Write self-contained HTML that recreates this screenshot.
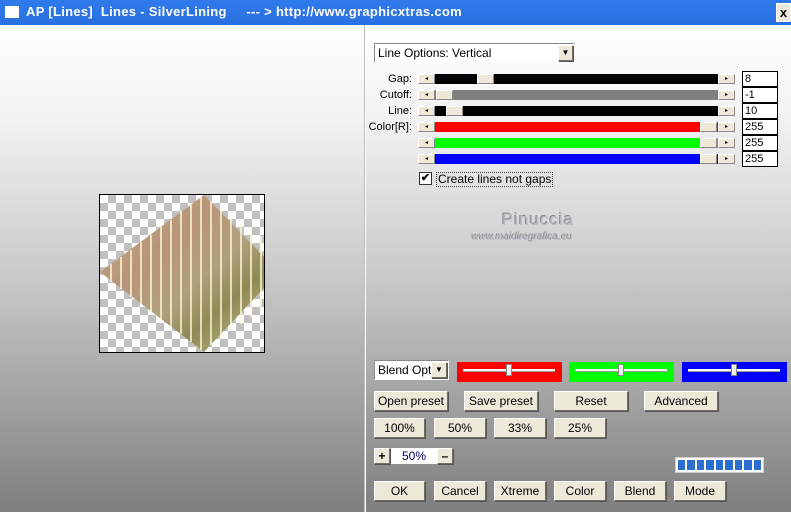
<!DOCTYPE html>
<html><head><style>
*{margin:0;padding:0;box-sizing:border-box}
body{width:791px;height:512px;position:relative;overflow:hidden;font-family:"Liberation Sans",sans-serif;font-size:11px;background:linear-gradient(#ffffff 25px,#f2f2f2 120px,#c8c8c8 280px,#a2a2a2 400px,#7f7f7f 512px)}
.a{position:absolute}
.title{left:0;top:0;width:791px;height:25px;background:linear-gradient(#2f7bec,#2a6fe0);color:#fff;font-size:13px;font-weight:bold;line-height:24px;padding-left:26px;letter-spacing:0.3px}
.btn{position:absolute;background:#ece9d8;border:1px solid;border-color:#fff #716f64 #716f64 #fff;box-shadow:1px 1px 0 #555;text-align:center;font-size:12px;color:#000;line-height:18px}
.arr{position:absolute;width:17px;height:10px;background:#ece9d8;border:1px solid;border-color:#fff #888 #888 #fff;font-size:6px;line-height:8px;text-align:center}
.val{position:absolute;left:742px;width:36px;height:16px;background:#fff;border:1px solid #000;font-size:11px;line-height:14px;padding-left:2px}
.lbl{position:absolute;width:60px;left:352px;text-align:right;font-size:11px;color:#000}
.chk{background-color:#fff;background-image:linear-gradient(45deg,#c0c0c0 25%,transparent 25%,transparent 75%,#c0c0c0 75%),linear-gradient(45deg,#c0c0c0 25%,transparent 25%,transparent 75%,#c0c0c0 75%);background-size:16px 16px;background-position:0 0,8px 8px}
</style></head><body>
<div class="a title">AP [Lines]&nbsp; Lines - SilverLining&nbsp;&nbsp;&nbsp;&nbsp; --- &gt; http://www.graphicxtras.com</div>
<div class="a" style="left:5px;top:6px;width:14px;height:12px;background:#fff;border-top:2px solid #fff"></div>
<div class="a" style="left:776px;top:3px;width:15px;height:19px;background:#ece9d8;border:1px solid #fff;font-weight:bold;font-size:13px;text-align:center;line-height:17px">x</div>
<div class="a" style="left:365px;top:25px;width:1px;height:487px;background:#fff"></div>
<div class="a" style="left:364px;top:25px;width:1px;height:487px;background:#bbb"></div>

<div class="a chk" style="left:99px;top:194px;width:166px;height:159px;border:1px solid #000;overflow:hidden">
<svg width="166" height="159" style="position:absolute;left:-1px;top:-1px">
<defs><linearGradient id="g" x1="0" y1="0" x2="1" y2="1">
<stop offset="0" stop-color="#c0ac80"/><stop offset="0.35" stop-color="#b8947a"/><stop offset="0.55" stop-color="#b0a07c"/><stop offset="0.7" stop-color="#8f8a55"/><stop offset="1" stop-color="#d0c898"/></linearGradient></defs>
<polygon points="1,78 105,1 180,78 105,158" fill="url(#g)"/>
<g stroke="#fff8d8" stroke-width="1.5">
<line x1="12" y1="70" x2="12" y2="88"/><line x1="22" y1="63" x2="22" y2="95"/><line x1="32" y1="56" x2="32" y2="103"/><line x1="42" y1="48" x2="42" y2="110"/><line x1="52" y1="41" x2="52" y2="118"/><line x1="62" y1="33" x2="62" y2="125"/><line x1="72" y1="26" x2="72" y2="133"/><line x1="82" y1="18" x2="82" y2="140"/><line x1="92" y1="11" x2="92" y2="148"/><line x1="102" y1="3" x2="102" y2="156"/><line x1="112" y1="7" x2="112" y2="151"/><line x1="122" y1="14" x2="122" y2="144"/><line x1="132" y1="21" x2="132" y2="137"/><line x1="142" y1="28" x2="142" y2="130"/><line x1="152" y1="35" x2="152" y2="123"/><line x1="162" y1="42" x2="162" y2="116"/>
</g></svg></div>

<div class="a" style="left:374px;top:43px;width:201px;height:20px;background:#fff;border:1px solid;border-color:#888 #fff #fff #888;font-size:12px;line-height:18px;padding-left:3px">Line Options: Vertical</div>
<div class="btn" style="left:558px;top:45px;width:15px;height:16px;font-size:8px;line-height:14px">▼</div>

<div class="lbl" style="top:73px">Gap:</div>
<div class="lbl" style="top:89px">Cutoff:</div>
<div class="lbl" style="top:105px">Line:</div>
<div class="lbl" style="top:121px">Color[R]:</div>

<div class="arr" style="left:418px;top:74px">◂</div><div class="a" style="left:435px;top:74px;width:283px;height:10px;background:#000"></div><div class="arr" style="left:718px;top:74px">▸</div><div class="arr" style="left:477px;top:74px;width:17px"></div>
<div class="arr" style="left:418px;top:90px">◂</div><div class="a" style="left:435px;top:90px;width:283px;height:10px;background:#808080"></div><div class="arr" style="left:718px;top:90px">▸</div><div class="arr" style="left:436px;top:90px"></div>
<div class="arr" style="left:418px;top:106px">◂</div><div class="a" style="left:435px;top:106px;width:283px;height:10px;background:#000"></div><div class="arr" style="left:718px;top:106px">▸</div><div class="arr" style="left:446px;top:106px"></div>
<div class="arr" style="left:418px;top:122px">◂</div><div class="a" style="left:435px;top:122px;width:283px;height:10px;background:#f00"></div><div class="arr" style="left:718px;top:122px">▸</div><div class="arr" style="left:700px;top:122px"></div>
<div class="arr" style="left:418px;top:138px">◂</div><div class="a" style="left:435px;top:138px;width:283px;height:10px;background:#0f0"></div><div class="arr" style="left:718px;top:138px">▸</div><div class="arr" style="left:700px;top:138px"></div>
<div class="arr" style="left:418px;top:154px">◂</div><div class="a" style="left:435px;top:154px;width:283px;height:10px;background:#00f"></div><div class="arr" style="left:718px;top:154px">▸</div><div class="arr" style="left:700px;top:154px"></div>

<div class="val" style="top:71px">8</div>
<div class="val" style="top:87px">-1</div>
<div class="val" style="top:103px">10</div>
<div class="val" style="top:119px">255</div>
<div class="val" style="top:135px">255</div>
<div class="val" style="top:151px">255</div>

<div class="a" style="left:419px;top:172px;width:13px;height:13px;background:#fff;border:1px solid #333;font-size:11px;line-height:11px;text-align:center;font-weight:bold">✔</div>
<div class="a" style="left:436px;top:172px;font-size:12px;border:1px dotted #444;padding:0 1px;line-height:13px">Create lines not gaps</div>

<div class="a" style="left:502px;top:210px;font-size:17px;color:#b8b8c0;text-shadow:-1px -1px 0 #888;letter-spacing:1px">Pinuccia</div>
<div class="a" style="left:472px;top:232px;font-size:10px;color:#b8b8c0;text-shadow:-1px -1px 0 #888;font-style:italic">www.maidiregrafica.eu</div>

<div class="a" style="left:374px;top:360px;width:75px;height:20px;background:#fff;border:1px solid;border-color:#888 #fff #fff #888;font-size:12px;line-height:18px;padding-left:3px;overflow:hidden;white-space:nowrap">Blend Opti</div>
<div class="btn" style="left:431px;top:362px;width:16px;height:16px;font-size:8px;line-height:14px">▼</div>
<div class="a" style="left:457px;top:362px;width:105px;height:20px;background:#f00"></div>
<div class="a" style="left:569px;top:362px;width:105px;height:20px;background:#0f0"></div>
<div class="a" style="left:682px;top:362px;width:105px;height:20px;background:#00f"></div>
<div class="a" style="left:463px;top:369px;width:92px;height:3px;background:#fff;border-bottom:1px solid #999"></div>
<div class="a" style="left:575px;top:369px;width:92px;height:3px;background:#fff;border-bottom:1px solid #999"></div>
<div class="a" style="left:688px;top:369px;width:92px;height:3px;background:#fff;border-bottom:1px solid #999"></div>
<div class="a" style="left:506px;top:364px;width:6px;height:12px;background:#f4f4f0;border:1px solid #888"></div>
<div class="a" style="left:618px;top:364px;width:6px;height:12px;background:#f4f4f0;border:1px solid #888"></div>
<div class="a" style="left:731px;top:364px;width:6px;height:12px;background:#f4f4f0;border:1px solid #888"></div>

<div class="btn" style="left:374px;top:391px;width:74px;height:20px">Open preset</div>
<div class="btn" style="left:464px;top:391px;width:74px;height:20px">Save preset</div>
<div class="btn" style="left:554px;top:391px;width:74px;height:20px">Reset</div>
<div class="btn" style="left:644px;top:391px;width:74px;height:20px">Advanced</div>

<div class="btn" style="left:374px;top:418px;width:51px;height:20px">100%</div>
<div class="btn" style="left:434px;top:418px;width:52px;height:20px">50%</div>
<div class="btn" style="left:494px;top:418px;width:52px;height:20px">33%</div>
<div class="btn" style="left:554px;top:418px;width:52px;height:20px">25%</div>

<div class="btn" style="left:374px;top:448px;width:16px;height:16px;line-height:14px;font-weight:bold">+</div>
<div class="a" style="left:391px;top:448px;width:46px;height:16px;background:#fff;font-size:12px;color:#000060;text-align:center;line-height:16px">50%</div>
<div class="btn" style="left:437px;top:448px;width:16px;height:16px;line-height:14px;font-weight:bold">–</div>

<div class="a" style="left:675px;top:457px;width:89px;height:16px;background:#fff;border:1px solid #ccc;padding:2px;display:flex;gap:2px">
<div style="flex:1;background:#2a6fd0"></div><div style="flex:1;background:#2a6fd0"></div><div style="flex:1;background:#2a6fd0"></div><div style="flex:1;background:#2a6fd0"></div><div style="flex:1;background:#2a6fd0"></div><div style="flex:1;background:#2a6fd0"></div><div style="flex:1;background:#2a6fd0"></div><div style="flex:1;background:#2a6fd0"></div><div style="flex:1;background:#2a6fd0"></div></div>

<div class="btn" style="left:374px;top:481px;width:51px;height:20px">OK</div>
<div class="btn" style="left:434px;top:481px;width:52px;height:20px">Cancel</div>
<div class="btn" style="left:494px;top:481px;width:52px;height:20px">Xtreme</div>
<div class="btn" style="left:554px;top:481px;width:52px;height:20px">Color</div>
<div class="btn" style="left:614px;top:481px;width:52px;height:20px">Blend</div>
<div class="btn" style="left:674px;top:481px;width:52px;height:20px">Mode</div>
</body></html>
